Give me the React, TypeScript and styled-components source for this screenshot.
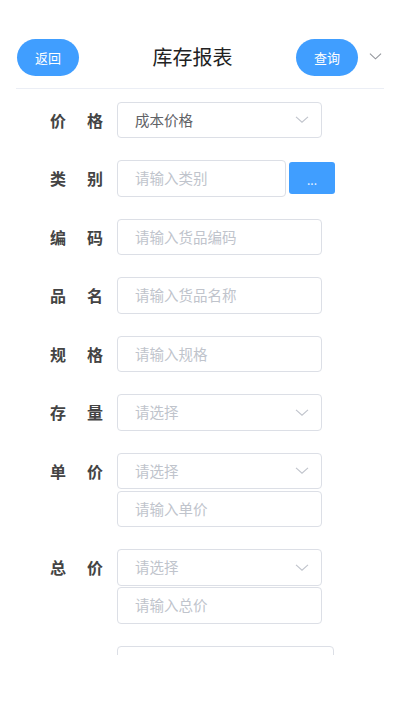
import React from "react";
import styled, { createGlobalStyle } from "styled-components";

const GlobalStyle = createGlobalStyle`
  html, body {
    margin: 0;
    padding: 0;
    background: #fff;
    font-family: "Noto Sans CJK SC", "Noto Sans", sans-serif;
  }
`;

type Field =
  | { label: string; kind: "select"; value?: string; placeholder?: string }
  | { label: string; kind: "input"; placeholder: string }
  | { label: string; kind: "picker"; placeholder: string }
  | { label: string; kind: "selectInput"; placeholder: string };

const fields: Field[] = [
  { label: "价格", kind: "select", value: "成本价格" },
  { label: "类别", kind: "picker", placeholder: "请输入类别" },
  { label: "编码", kind: "input", placeholder: "请输入货品编码" },
  { label: "品名", kind: "input", placeholder: "请输入货品名称" },
  { label: "规格", kind: "input", placeholder: "请输入规格" },
  { label: "存量", kind: "select", placeholder: "请选择" },
  { label: "单价", kind: "selectInput", placeholder: "请输入单价" },
  { label: "总价", kind: "selectInput", placeholder: "请输入总价" },
];

const Chevron = ({ color = "#c0c4cc", size = 14 }: { color?: string; size?: number }) => (
  <svg width={size} height={size * 0.5} viewBox="0 0 14 7" fill="none">
    <path d="M1 0.8 L7 6.2 L13 0.8" stroke={color} strokeWidth="1.1" />
  </svg>
);

const Select = ({ value, placeholder }: { value?: string; placeholder?: string }) => (
  <Box>
    <BoxText empty={!value}>{value || placeholder}</BoxText>
    <Chevron />
  </Box>
);

const App = () => {
  return (
    <Page>
      <GlobalStyle />
      <Header>
        <PillButton>返回</PillButton>
        <Title>库存报表</Title>
        <RightGroup>
          <PillButton>查询</PillButton>
          <Chevron color="#909399" size={13} />
        </RightGroup>
      </Header>
      <Body>
        {fields.map((f) => (
          <Row key={f.label}>
            <Label>
              <span>{f.label[0]}</span>
              <span>{f.label[1]}</span>
            </Label>
            <Controls>
              {f.kind === "select" && <Select value={f.value} placeholder={f.placeholder} />}
              {f.kind === "input" && (
                <Box>
                  <BoxText empty>{f.placeholder}</BoxText>
                </Box>
              )}
              {f.kind === "picker" && (
                <PickerLine>
                  <Box width={169}>
                    <BoxText empty>{f.placeholder}</BoxText>
                  </Box>
                  <DotsButton>...</DotsButton>
                </PickerLine>
              )}
              {f.kind === "selectInput" && (
                <>
                  <Select placeholder="请选择" />
                  <Box>
                    <BoxText empty>{f.placeholder}</BoxText>
                  </Box>
                </>
              )}
            </Controls>
          </Row>
        ))}
        <Row>
          <Label />
          <Controls>
            <Box width={217} height={60} />
          </Controls>
        </Row>
      </Body>
    </Page>
  );
};

export default App;

const Page = styled.div`
  width: 400px;
  height: 711px;
  background: #fff;
  overflow: hidden;
`;

const Header = styled.div`
  display: flex;
  align-items: center;
  margin: 0 16px;
  padding: 39px 0 12px 1px;
  border-bottom: 1px solid #ebeef5;
`;

const PillButton = styled.button`
  width: 62px;
  height: 37px;
  border: 0;
  border-radius: 19px;
  background: #409eff;
  color: #fff;
  font-family: inherit;
  font-size: 13px;
  line-height: 1;
  padding: 0;
`;

const Title = styled.div`
  flex: 1;
  text-align: center;
  padding-left: 10px;
  font-size: 20px;
  line-height: 1;
  margin-top: -2px;
  color: #222;
`;

const RightGroup = styled.div`
  display: flex;
  align-items: center;
  gap: 11px;
  padding-right: 2px;

  svg {
    margin-top: -2px;
  }
`;

const Body = styled.div`
  height: 566px;
  overflow: hidden;
  padding: 12.5px 0 0 50px;
  box-sizing: border-box;
  display: flex;
  flex-direction: column;
  gap: 22px;
`;

const Row = styled.div`
  display: flex;
  align-items: flex-start;
  gap: 14px;
  flex-shrink: 0;
`;

const Label = styled.div`
  width: 53px;
  height: 36.5px;
  display: flex;
  align-items: center;
  justify-content: space-between;
  font-size: 16px;
  line-height: 1;
  font-weight: 700;
  color: #444;
`;

const Controls = styled.div`
  display: flex;
  flex-direction: column;
  gap: 1.5px;
`;

const Box = styled.div<{ width?: number; height?: number }>`
  width: ${({ width }) => width ?? 205}px;
  height: ${({ height }) => height ?? 36.5}px;
  box-sizing: border-box;
  border: 1px solid #dcdfe6;
  border-radius: 4px;
  display: flex;
  align-items: center;
  justify-content: space-between;
  padding: 0 12px 0 17px;
  background: #fff;
`;

const BoxText = styled.span<{ empty?: boolean }>`
  font-size: 14.5px;
  line-height: 1;
  color: ${({ empty }) => (empty ? "#c0c4cc" : "#606266")};
`;

const PickerLine = styled.div`
  display: flex;
  align-items: center;
  gap: 3px;
`;

const DotsButton = styled.button`
  width: 46px;
  height: 32px;
  border: 0;
  border-radius: 3px;
  background: #409eff;
  color: #e8f2ff;
  font-family: inherit;
  font-size: 12px;
  padding: 2px 0 0;
`;
